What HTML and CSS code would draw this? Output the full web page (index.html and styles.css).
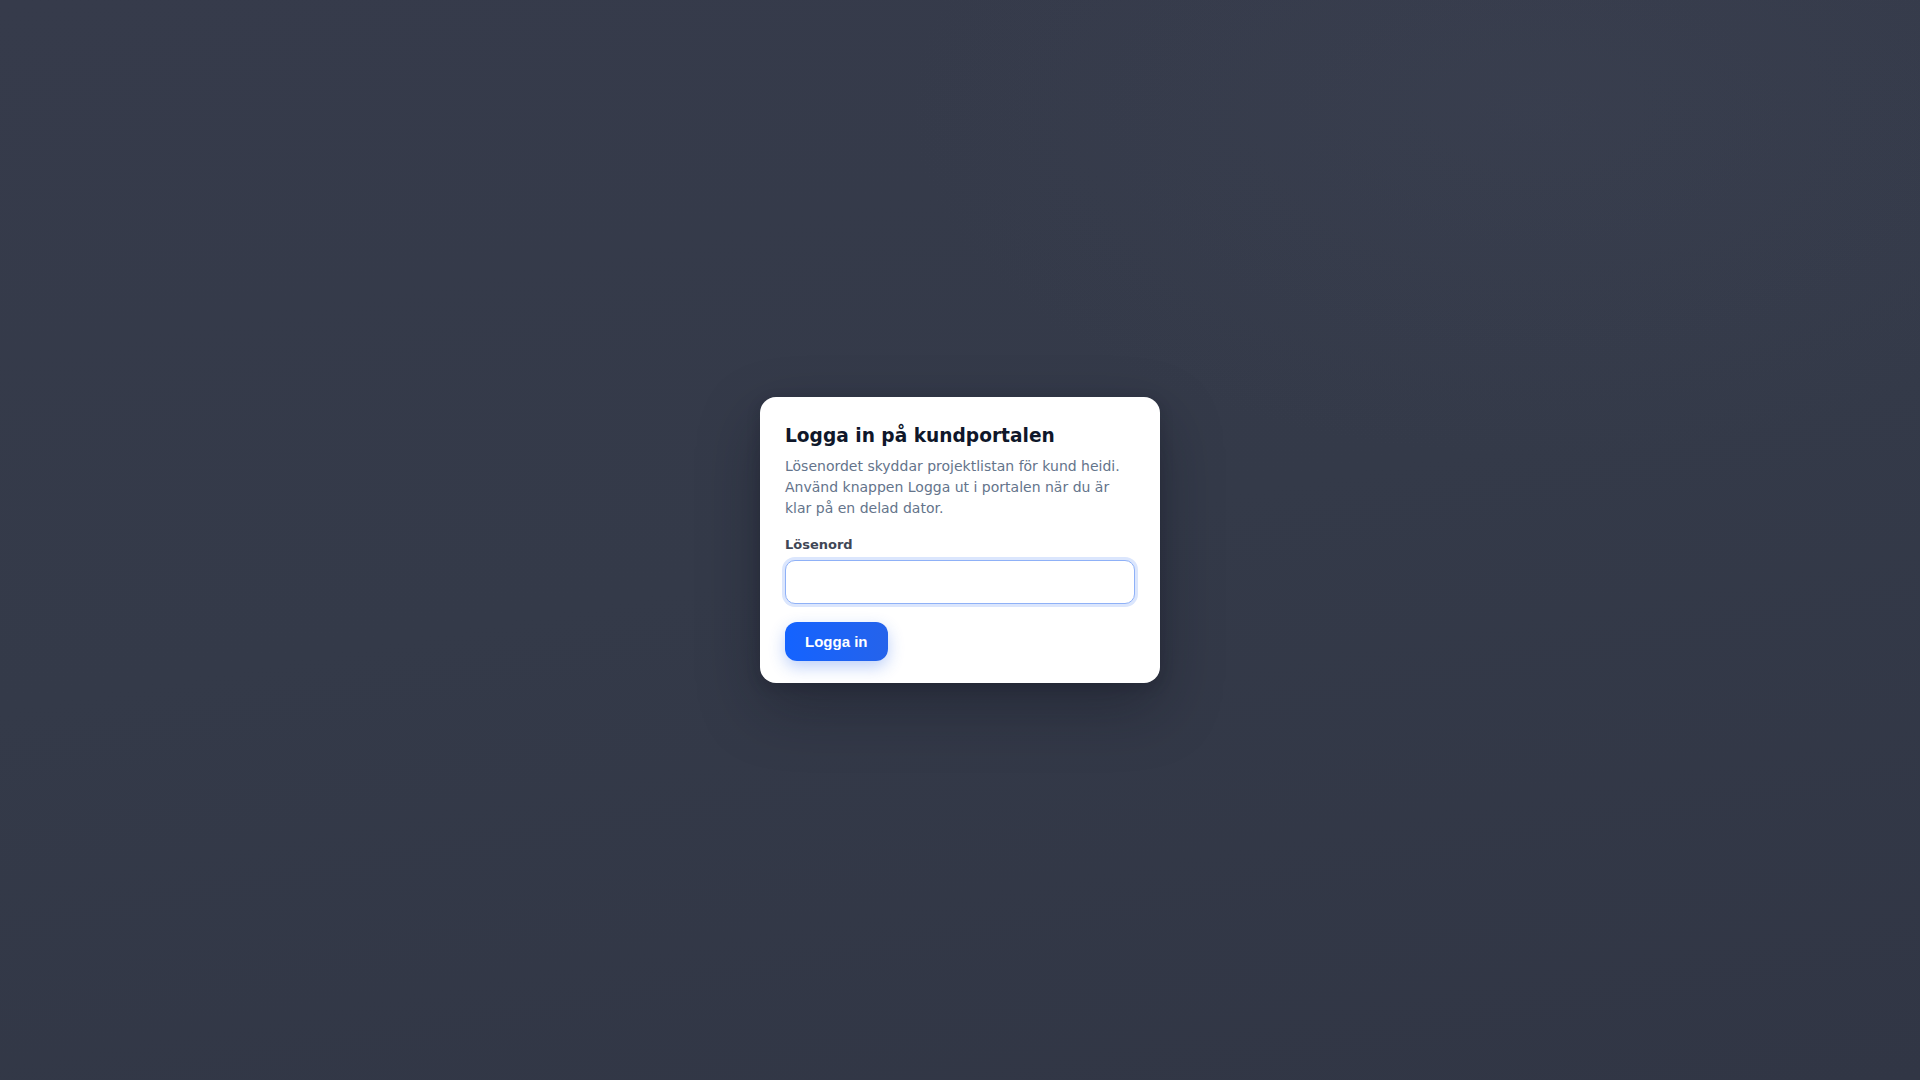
FILE: index.html
```html
<!DOCTYPE html>
<html lang="sv">
<head>
<meta charset="utf-8">
<title>Logga in</title>
<link rel="stylesheet" href="styles.css">
</head>
<body>
<main class="page">
  <form class="card">
    <h1 class="title">Logga in på kundportalen</h1>
    <p class="lead">Lösenordet skyddar projektlistan för kund heidi. Använd knappen Logga ut i portalen när du är klar på en delad dator.</p>
    <label class="label" for="pw">Lösenord</label>
    <input class="input" id="pw" type="password">
    <button class="btn" type="button">Logga in</button>
  </form>
</main>
</body>
</html>
```
FILE: styles.css
```css
* { box-sizing: border-box; }
html, body { margin: 0; height: 100%; }
body {
  font-family: "DejaVu Sans", sans-serif;
  background:
    radial-gradient(ellipse 900px 500px at 80% 10%, rgba(70,76,94,0.2), rgba(70,76,94,0) 70%),
    linear-gradient(170deg, #363b4b 0%, #343a49 50%, #313645 100%);
}
.page {
  height: 100%;
  display: flex;
  align-items: center;
  justify-content: center;
}
.card {
  width: 400px;
  background: #ffffff;
  border-radius: 16px;
  padding: 24px 25px 22px;
  display: flex;
  flex-direction: column;
  box-shadow: 0 24px 60px rgba(15, 18, 30, 0.35), 0 4px 14px rgba(15, 18, 30, 0.18);
}
.title {
  margin: 0;
  font-size: 18.6px;
  line-height: 29px;
  font-weight: 700;
  color: #0f172a;
}
.lead {
  margin: 6px 0 0;
  font-size: 14px;
  line-height: 21px;
  color: #64748b;
}
.label {
  margin-top: 17px;
  font-size: 13px;
  line-height: 18px;
  font-weight: 700;
  color: #3f4756;
}
.input {
  margin-top: 6px;
  height: 44px;
  width: 100%;
  border: 1px solid #8fb1f7;
  border-radius: 10px;
  background: #fff;
  box-shadow: 0 0 0 3px #dbe6fd;
  outline: none;
  padding: 0 12px;
  font-size: 14px;
}
.btn {
  margin-top: 18px;
  align-self: flex-start;
  font-family: "Liberation Sans", Arial, sans-serif;
  font-size: 15px;
  font-weight: 700;
  line-height: 17px;
  color: #ffffff;
  padding: 11px 20px;
  border: none;
  border-radius: 12px;
  background: linear-gradient(90deg, #1463ff, #2563eb);
  box-shadow: 0 6px 16px rgba(37, 99, 235, 0.3);
  cursor: pointer;
}
```
